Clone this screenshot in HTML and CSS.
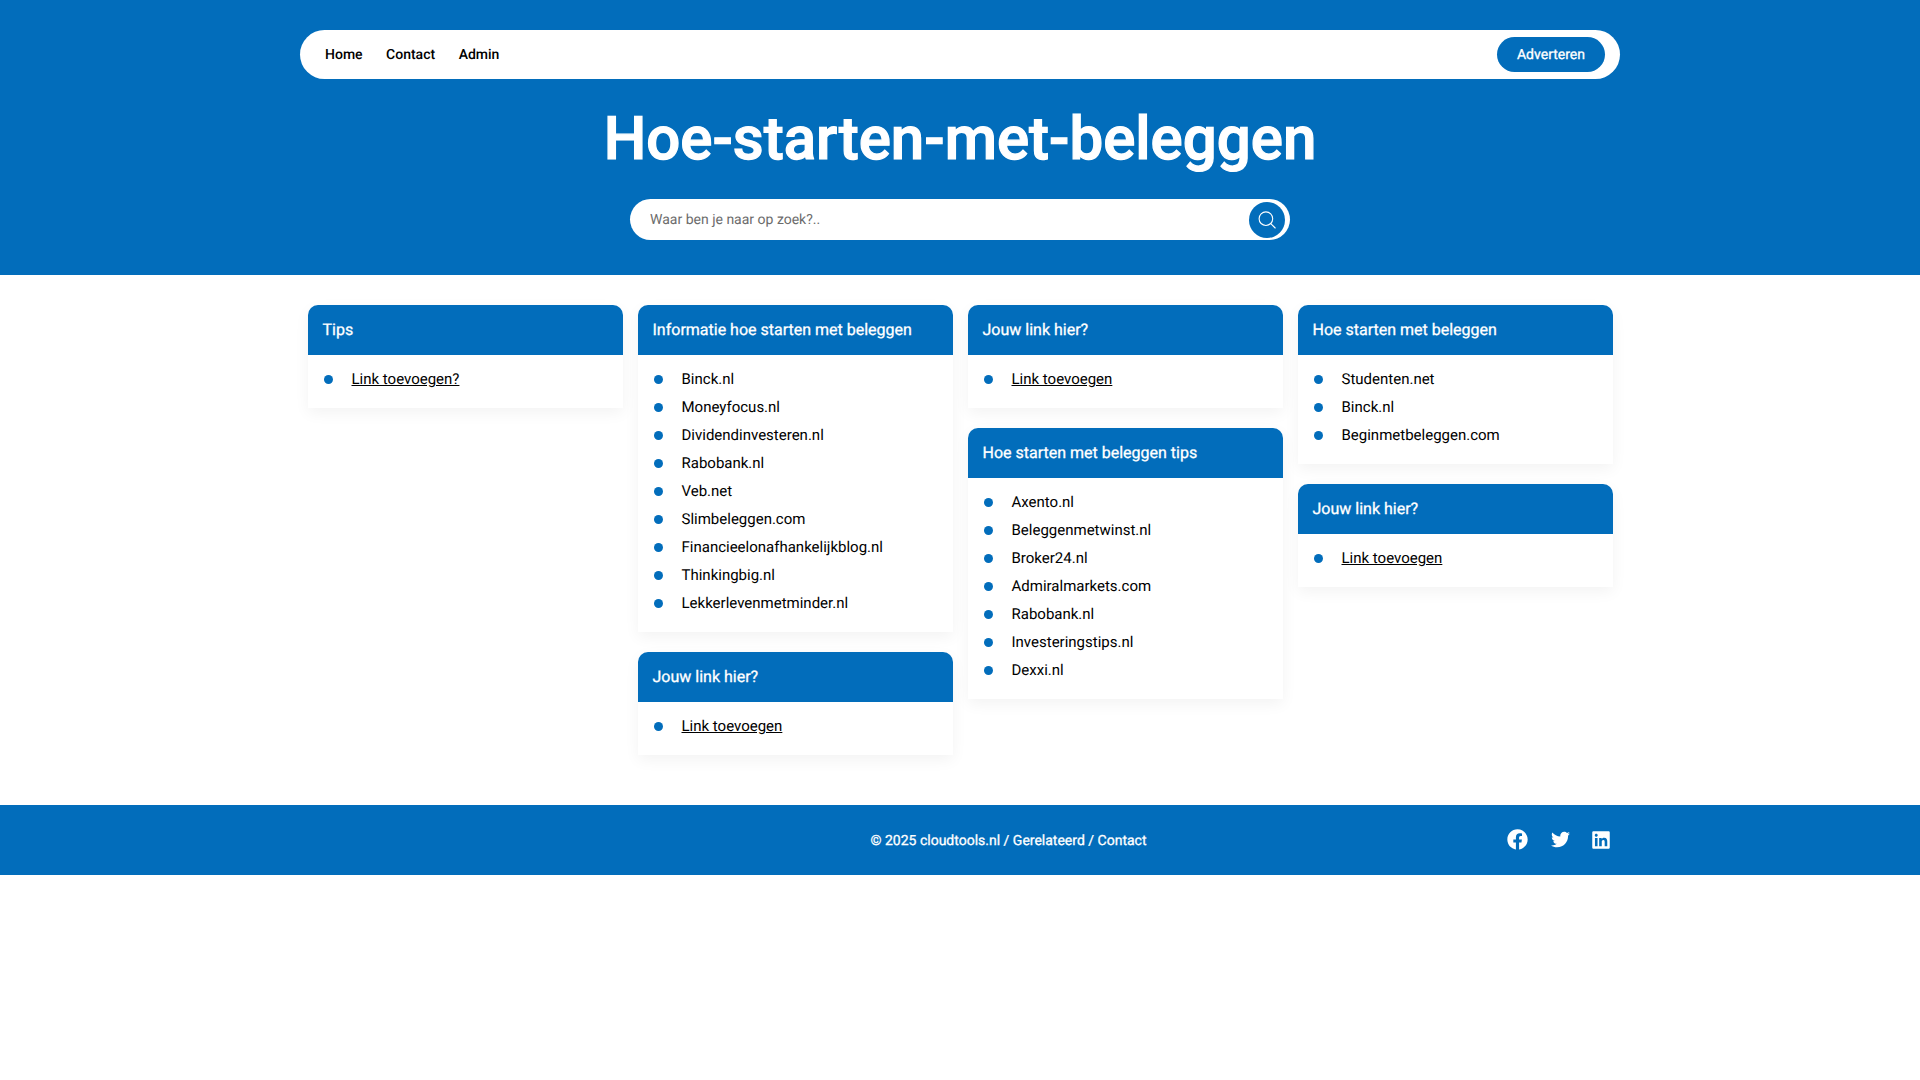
FILE: index.html
```html
<!DOCTYPE html>
<html lang="nl">
<head>
<meta charset="utf-8">
<title>Hoe-starten-met-beleggen</title>
<link rel="stylesheet" href="styles.css">
</head>
<body>
<header class="header">
  <nav class="nav">
    <div class="menu"><a href="#">Home</a><a href="#">Contact</a><a href="#">Admin</a></div>
    <a class="button" href="#">Adverteren</a>
  </nav>
  <h1 class="title">Hoe-starten-met-beleggen</h1>
  <form class="search">
    <input class="search-input" type="text" placeholder="Waar ben je naar op zoek?..">
    <button class="search-button" type="button" aria-label="Zoeken">
      <svg width="18" height="18" viewBox="0 0 18 18" fill="none" stroke="#fff" stroke-width="1.1" stroke-linecap="round"><circle cx="7.9" cy="7.7" r="6.8"/><path d="M12.8 12.6 17.2 17"/></svg>
    </button>
  </form>
</header>
<main class="columns">
  <div class="column">
    <section class="card"><h2 class="card-title">Tips</h2><ul class="links"><li><a class="add" href="#">Link toevoegen?</a></li></ul></section>
  </div>
  <div class="column">
    <section class="card"><h2 class="card-title">Informatie hoe starten met beleggen</h2><ul class="links">
      <li><a href="#">Binck.nl</a></li>
      <li><a href="#">Moneyfocus.nl</a></li>
      <li><a href="#">Dividendinvesteren.nl</a></li>
      <li><a href="#">Rabobank.nl</a></li>
      <li><a href="#">Veb.net</a></li>
      <li><a href="#">Slimbeleggen.com</a></li>
      <li><a href="#">Financieelonafhankelijkblog.nl</a></li>
      <li><a href="#">Thinkingbig.nl</a></li>
      <li><a href="#">Lekkerlevenmetminder.nl</a></li>
    </ul></section>
    <section class="card"><h2 class="card-title">Jouw link hier?</h2><ul class="links"><li><a class="add" href="#">Link toevoegen</a></li></ul></section>
  </div>
  <div class="column">
    <section class="card"><h2 class="card-title">Jouw link hier?</h2><ul class="links"><li><a class="add" href="#">Link toevoegen</a></li></ul></section>
    <section class="card"><h2 class="card-title">Hoe starten met beleggen tips</h2><ul class="links">
      <li><a href="#">Axento.nl</a></li>
      <li><a href="#">Beleggenmetwinst.nl</a></li>
      <li><a href="#">Broker24.nl</a></li>
      <li><a href="#">Admiralmarkets.com</a></li>
      <li><a href="#">Rabobank.nl</a></li>
      <li><a href="#">Investeringstips.nl</a></li>
      <li><a href="#">Dexxi.nl</a></li>
    </ul></section>
  </div>
  <div class="column">
    <section class="card"><h2 class="card-title">Hoe starten met beleggen</h2><ul class="links">
      <li><a href="#">Studenten.net</a></li>
      <li><a href="#">Binck.nl</a></li>
      <li><a href="#">Beginmetbeleggen.com</a></li>
    </ul></section>
    <section class="card"><h2 class="card-title">Jouw link hier?</h2><ul class="links"><li><a class="add" href="#">Link toevoegen</a></li></ul></section>
  </div>
</main>
<footer class="footer">
  <div class="footer-inner">
    <p class="copyright">© 2025 cloudtools.nl / <a href="#">Gerelateerd</a> / <a href="#">Contact</a></p>
    <div class="social">
      <a href="#" aria-label="Facebook"><svg width="21" height="21" viewBox="0 0 512 512"><path fill="#fff" d="M504 256C504 119 393 8 256 8S8 119 8 256c0 123.78 90.69 226.38 209.25 245V327.690h-63V256h63v-54.640c0-62.150 37-96.480 93.670-96.480 27.140 0 55.520 4.840 55.520 4.840v61h-31.280c-30.800 0-40.410 19.120-40.410 38.730V256h68.780l-11 71.690h-57.780V501C413.310 482.380 504 379.780 504 256z"/></svg></a>
      <a href="#" aria-label="Twitter"><svg width="19" height="19" viewBox="0 0 512 512"><path fill="#fff" d="M459.370 151.716c.325 4.548.325 9.097.325 13.645 0 138.720-105.583 298.558-298.558 298.558-59.452 0-114.680-17.219-161.137-47.106 8.447.974 16.568 1.299 25.340 1.299 49.055 0 94.213-16.568 130.274-44.832-46.132-.975-84.792-31.188-98.112-72.772 6.498.974 12.995 1.624 19.818 1.624 9.421 0 18.843-1.300 27.614-3.573-48.081-9.747-84.143-51.980-84.143-102.985v-1.299c13.969 7.797 30.214 12.670 47.431 13.319-28.264-18.843-46.781-51.005-46.781-87.391 0-19.492 5.197-37.360 14.294-52.954 51.655 63.675 129.300 105.258 216.365 109.807-1.624-7.797-2.599-15.918-2.599-24.040 0-57.828 46.782-104.934 104.934-104.934 30.213 0 57.502 12.670 76.670 33.137 23.715-4.548 46.456-13.320 66.599-25.340-7.798 24.366-24.366 44.833-46.132 57.827 21.117-2.273 41.584-8.122 60.426-16.243-14.292 20.791-32.161 39.308-52.628 54.253z"/></svg></a>
      <a href="#" aria-label="LinkedIn"><svg width="18" height="20" viewBox="0 0 448 512"><path fill="#fff" d="M416 32H31.900C14.300 32 0 46.500 0 64.300v383.400C0 465.500 14.300 480 31.900 480H416c17.600 0 32-14.500 32-32.300V64.300c0-17.800-14.400-32.300-32-32.300zM135.400 416H69V202.200h66.500V416zm-33.200-243c-21.300 0-38.500-17.300-38.500-38.500S80.900 96 102.200 96c21.200 0 38.500 17.300 38.500 38.500 0 21.300-17.200 38.500-38.500 38.500zm282.100 243h-66.400V312c0-24.800-.5-56.700-34.500-56.700-34.600 0-39.900 27-39.900 54.900V416h-66.400V202.200h63.700v29.200h.9c8.900-16.800 30.600-34.500 62.900-34.500 67.200 0 79.700 44.300 79.700 101.900V416z"/></svg></a>
    </div>
  </div>
</footer>
</body>
</html>
```
FILE: styles.css
```css
:root { --blue: #026dbb; }
* { box-sizing: border-box; margin: 0; padding: 0; }
body { font-family: Roboto, sans-serif; font-size: 15px; color: #000; background: #fff; text-rendering: geometricPrecision; }
a { color: inherit; text-decoration: none; }
.header { height: 275px; padding-top: 30px; background: var(--blue); }
.nav { display: flex; align-items: center; justify-content: space-between; width: 1320px; height: 49px; margin: 0 auto; padding: 0 15px 0 25px; border-radius: 25px; background: #fff; }
.menu { display: flex; gap: 23.5px; padding-top: 1px; font-size: 14px; font-weight: 500; }
.button { width: 108px; height: 35px; border-radius: 18px; background: var(--blue); color: #fff; font-size: 14px; font-weight: 400; line-height: 36px; text-align: center; -webkit-text-stroke: .3px #fff; }
.title { margin-top: 20px; color: #fff; font-size: 60px; font-weight: 500; line-height: 80px; text-align: center; -webkit-text-stroke: 1.2px #fff; }
.search { display: flex; align-items: center; width: 660px; height: 41px; margin: 20px auto 0; padding: 0 5px 0 20px; border-radius: 21px; background: #fff; }
.search-input { flex: 1; height: 41px; border: 0; outline: 0; background: transparent; font: 14px Roboto, sans-serif; text-rendering: geometricPrecision; }
.search-input::placeholder { color: #6c6c6c; }
.search-button { display: flex; align-items: center; justify-content: center; width: 36px; height: 36px; border: 0; border-radius: 50%; background: var(--blue); }
.columns { display: grid; grid-template-columns: repeat(4, 315px); column-gap: 15px; width: 1305px; margin: 0 auto; padding: 30px 0; }
.card { margin-bottom: 20px; border-radius: 10px 10px 0 0; background: #fff; box-shadow: 0 5px 15px rgba(0, 0, 0, .05); }
.card-title { height: 50px; padding-left: 15px; border-radius: 10px 10px 0 0; background: var(--blue); color: #fff; font-size: 16px; font-weight: 400; line-height: 49px; -webkit-text-stroke: .3px #fff; }
.links { padding: 10px 15px 15px; list-style: none; }
.links li { display: flex; align-items: center; height: 28px; }
.links li::before { content: ""; width: 9px; height: 9px; margin: 0 18.5px 0 1.5px; border-radius: 50%; background: var(--blue); }
.add { text-decoration: underline; }
.footer { height: 70px; background: var(--blue); color: #fff; }
.footer-inner { display: grid; grid-template-columns: 207px 1fr 110px; align-items: center; width: 1320px; height: 70px; margin: 0 auto; }
.copyright { grid-column: 2; padding-top: 1px; font-size: 14px; font-weight: 400; text-align: center; -webkit-text-stroke: .3px #fff; }
.social { display: flex; align-items: center; justify-content: flex-end; gap: 22.5px; padding: 0 10px 1px 0; }
.social svg { display: block; }
```
